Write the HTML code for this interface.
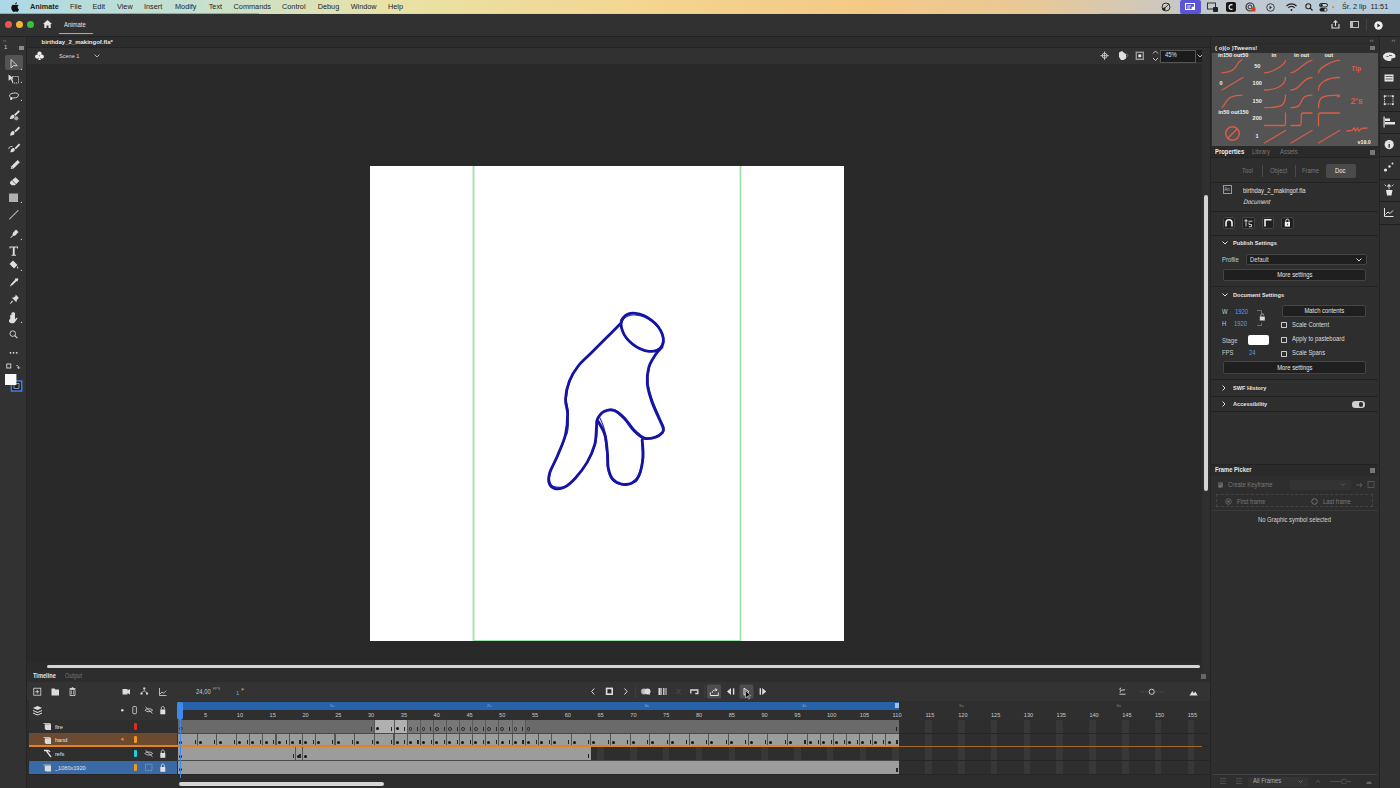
<!DOCTYPE html>
<html><head><meta charset="utf-8">
<style>
*{margin:0;padding:0;box-sizing:border-box}
html,body{width:1400px;height:788px;overflow:hidden;background:#272727;font-family:"Liberation Sans",sans-serif;color:#ddd}
.a{position:absolute}
.t{position:absolute;white-space:nowrap;line-height:1}
svg{position:absolute;overflow:visible}
#menubar{left:0;top:0;width:1400px;height:14px;background:linear-gradient(90deg,#acd9e6 0%,#c6e0cf 14%,#e9e2a6 28%,#f3d691 45%,#f4c986 62%,#e8c898 74%,#c4c8cc 86%,#b2cde0 100%)}
#menubar .t{top:3px;font-size:7.3px;color:#1e1e1e}
#titlebar{left:0;top:14px;width:1400px;height:22.5px;background:#313131;border-bottom:1px solid #222}
#toolbar{left:0;top:36.5px;width:27px;height:752px;background:#323232;border-right:1px solid #252525}
#doctab{left:27px;top:36.5px;width:1183px;height:11.5px;background:#2c2c2c;border-bottom:1px solid #252525}
#scenebar{left:27px;top:48px;width:1175px;height:16px;background:#313131}
#paste{left:27px;top:64px;width:1175px;height:607px;background:#292929}
#vscroll{left:1202px;top:48px;width:8px;height:623px;background:#2f2f2f}
#stage{left:370px;top:166px;width:474px;height:475px;background:#fff}
#timeline{left:27px;top:671px;width:1183px;height:117px;background:#2d2d2d}
#rpanel{left:1210px;top:36.5px;width:169px;height:752px;background:#2e2e2e;border-left:1px solid #242424}
#ricons{left:1378.5px;top:36.5px;width:21.5px;height:752px;background:#313131;border-left:1px solid #242424}
</style></head>
<body>
<div id="menubar" class="a">
<div class="a" style="left:0;top:13px;width:259px;height:1px;background:#6cb2dc"></div><div class="a" style="left:259px;top:13px;width:841px;height:1px;background:linear-gradient(90deg,#e6dc98,#f0c880 60%,#d8c8a8)"></div><div class="a" style="left:1100px;top:13px;width:300px;height:1px;background:#a8c4dc"></div>
<svg style="left:11px;top:2px" width="8" height="10" viewBox="0 0 16 20"><path fill="#111" d="M13.2 10.6c0-2.3 1.9-3.4 2-3.5-1.1-1.6-2.8-1.8-3.4-1.8-1.4-.1-2.8.9-3.5.9-.7 0-1.8-.8-3-.8C3.7 5.4 2.2 6.3 1.4 7.8c-1.7 2.9-.4 7.2 1.2 9.6.8 1.2 1.8 2.5 3 2.4 1.2 0 1.7-.8 3.1-.8 1.5 0 1.9.8 3.1.8 1.3 0 2.1-1.2 2.9-2.3.9-1.3 1.3-2.6 1.3-2.7 0 0-2.6-1-2.8-4.2zM10.9 3.6c.6-.8 1.1-1.9 1-3-.9 0-2.1.6-2.7 1.4-.6.7-1.1 1.8-1 2.9 1 .1 2.1-.5 2.7-1.3z"/></svg>
<span class="t" style="left:30px;font-weight:700">Animate</span>
<span class="t" style="left:70px">File</span>
<span class="t" style="left:92.5px">Edit</span>
<span class="t" style="left:117px">View</span>
<span class="t" style="left:144px">Insert</span>
<span class="t" style="left:175px">Modify</span>
<span class="t" style="left:208.7px">Text</span>
<span class="t" style="left:233.6px">Commands</span>
<span class="t" style="left:282px">Control</span>
<span class="t" style="left:317.7px">Debug</span>
<span class="t" style="left:350.7px">Window</span>
<span class="t" style="left:388px">Help</span>
<!-- status icons -->
<svg style="left:1161px;top:2px" width="10" height="10" viewBox="0 0 10 10"><circle cx="5" cy="5" r="4" fill="none" stroke="#333" stroke-width="1"/><path d="M2 7l3-2 3-3" stroke="#333" stroke-width="1" fill="none"/><circle cx="3" cy="7" r="1.6" fill="#222"/></svg>
<div class="a" style="left:1180px;top:0;width:21px;height:14px;background:#5b55d6;border-radius:2px"></div>
<svg style="left:1185px;top:3px" width="11" height="8" viewBox="0 0 11 8"><rect x="0.5" y="0.5" width="9" height="6" fill="none" stroke="#fff" stroke-width="1"/><path d="M2 3h4M2 5h3" stroke="#fff" stroke-width="0.8"/><circle cx="8" cy="5" r="1.5" fill="#fff"/></svg>
<svg style="left:1207px;top:2px" width="11" height="10" viewBox="0 0 11 10"><rect x="0.5" y="1" width="8" height="6" fill="none" stroke="#333" stroke-width="1"/><rect x="6" y="5" width="5" height="5" rx="1" fill="#222"/></svg>
<div class="a" style="left:1226px;top:2px;width:10px;height:10px;background:#151515;border-radius:2px"></div>
<svg style="left:1228px;top:4px" width="6" height="6" viewBox="0 0 6 6"><path d="M4.5 1A2.3 2.3 0 1 0 4.5 5" stroke="#fff" stroke-width="1.1" fill="none"/></svg>
<svg style="left:1245px;top:2px" width="11" height="10" viewBox="0 0 11 10"><circle cx="5" cy="5" r="4" fill="none" stroke="#333" stroke-width="1.2"/><circle cx="5" cy="5" r="2" fill="none" stroke="#333" stroke-width="1"/><rect x="6.5" y="5.5" width="4" height="4" fill="#d84020"/></svg>
<svg style="left:1266px;top:2.5px" width="9" height="9" viewBox="0 0 9 9"><circle cx="4.5" cy="4.5" r="3.8" fill="none" stroke="#333" stroke-width="0.9"/><path d="M3.5 2.8v3.4l2.6-1.7z" fill="#333"/></svg>
<svg style="left:1286px;top:3px" width="11" height="8" viewBox="0 0 11 8"><path d="M0.5 3A7 7 0 0 1 10.5 3" stroke="#222" stroke-width="1.2" fill="none"/><path d="M2.3 4.8A4.5 4.5 0 0 1 8.7 4.8" stroke="#222" stroke-width="1.2" fill="none"/><circle cx="5.5" cy="7" r="1" fill="#222"/></svg>
<svg style="left:1305px;top:3px" width="8" height="8" viewBox="0 0 8 8"><circle cx="3.3" cy="3.3" r="2.5" fill="none" stroke="#222" stroke-width="1.1"/><path d="M5.2 5.2L7.5 7.5" stroke="#222" stroke-width="1.2"/></svg>
<svg style="left:1319px;top:2.5px" width="10" height="9" viewBox="0 0 10 9"><rect x="0.5" y="0.5" width="8" height="3.5" rx="1.7" fill="none" stroke="#222" stroke-width="1"/><rect x="0.5" y="5" width="8" height="3.5" rx="1.7" fill="#222"/><circle cx="2.5" cy="2.2" r="1.2" fill="#222"/><circle cx="6.5" cy="6.7" r="1.2" fill="#ccc"/></svg>
<div class="a" style="left:1332px;top:6px;width:2px;height:2px;border-radius:1px;background:#f08020"></div>
<span class="t" style="left:1342px">Śr. 2 lip</span>
<span class="t" style="left:1370.5px">11:51</span>
</div>

<div id="titlebar" class="a">
<div class="a" style="left:5px;top:7px;width:7px;height:7px;border-radius:50%;background:#e8574d"></div>
<div class="a" style="left:15.5px;top:7px;width:7px;height:7px;border-radius:50%;background:#f0b62e"></div>
<div class="a" style="left:26.5px;top:7px;width:7px;height:7px;border-radius:50%;background:#36c23e"></div>
<svg style="left:43px;top:6px" width="9" height="8" viewBox="0 0 9 8"><path d="M4.5 0L0 4h1.3v4h2.2V5.5h2V8h2.2V4H9z" fill="#e6e6e6"/></svg>
<span class="t" style="left:64px;top:7.6px;font-size:6.6px;color:#e4e4e4;transform:scaleX(0.9);transform-origin:0 0">Animate</span>
<div class="a" style="left:58.5px;top:19px;width:34px;height:1.2px;background:#aaa"></div>
<svg style="left:1331px;top:6px" width="9" height="9" viewBox="0 0 9 9"><path d="M1 4v4h7V4" stroke="#e0e0e0" stroke-width="1.1" fill="none"/><path d="M4.5 6V0.8M2.6 2.6l1.9-1.9 1.9 1.9" stroke="#e0e0e0" stroke-width="1.1" fill="none"/></svg>
<svg style="left:1350px;top:7px" width="9" height="7" viewBox="0 0 9 7"><rect x="0.5" y="0.5" width="8" height="6" stroke="#bbb" stroke-width="1" fill="none"/><rect x="0.5" y="0.5" width="2.5" height="6" fill="#bbb"/></svg>
<div class="a" style="left:1366px;top:5px;width:1px;height:12px;background:#444"></div>
<svg style="left:1374px;top:6.5px" width="9" height="9" viewBox="0 0 9 9"><circle cx="4.5" cy="4.5" r="4.2" fill="#f0f0f0"/><path d="M3.4 2.6v3.8l3-1.9z" fill="#2a2a2a"/></svg>
</div>

<div id="toolbar" class="a">
<span class="t" style="left:3px;top:1px;font-size:5px;color:#888">&#8249;&#8249;</span>
<span class="t" style="left:4px;top:7.5px;font-size:6px;color:#ccc">1</span>
<div class="a" style="left:18.5px;top:9px;width:5px;height:4px;background:#8a8a8a"></div>
<div class="a" style="left:5px;top:18.7px;width:17.5px;height:14.5px;background:#545454;border-radius:2px"></div>
<svg style="left:0;top:0" width="27" height="400" viewBox="0 36 27 400">
<g fill="none" stroke="#dedede" stroke-width="0.9">
<path d="M11 58.5v8.5l2.3-2.3h4z"/>
<path d="M12.5 75.5h6v6.5h-6z" stroke-dasharray="1.2 0.8"/>
<path d="M13.5 92.2c3-0.8 5 0.4 5 2 0 1.8-2.5 2.8-5 2.8-2 0-4-0.8-4-2.2 0-1.5 2-2.6 4-2.6"/>
</g>
<g fill="#dedede">
<path d="M8.5 73.5l5 3.8-2 0.5 1.8 3-0.9 0.5-1.8-3-2 1.5z"/>
<circle cx="11.2" cy="97.8" r="1.2"/>
<path d="M20.5 69l1.5-1.5v1.5z M20.5 82l1.5-1.5v1.5z M20.5 100l1.5-1.5v1.5z"/>
<path d="M18.6 109.2l1.3 1.3-4.6 4.6-1.3-1.3z"/><path d="M13.6 113.8c1.2 1.1 1 3-0.5 3.7-1 0.5-2.8 0.4-3.4 0.5 0.5-0.7 0.5-1.9 1-2.8 0.6-1.2 2-1.9 2.9-1.4z"/><circle cx="16.3" cy="117.3" r="2.1" fill="#aaa"/>
<path d="M18.8 125.6l1.3 1.3-4.4 4.4-1.3-1.3z"/><path d="M13.8 130.2c1.2 1.1 1 3-0.5 3.7-1 0.5-2.8 0.4-3.4 0.5 0.5-0.7 0.5-1.9 1-2.8 0.6-1.2 2-1.9 2.9-1.4z"/>
<path d="M19 142.5l1.3 1.3-4.4 4.4-1.3-1.3z"/><path d="M14 147.1c1.2 1.1 1 3-0.5 3.7-1 0.5-2.8 0.4-3.4 0.5 0.5-0.7 0.5-1.9 1-2.8 0.6-1.2 2-1.9 2.9-1.4z"/><path d="M12.5 145.5c-2.5-0.5-4 1-3.6 2.6" fill="none" stroke="#dedede" stroke-width="0.8"/>
<path d="M17.6 159l2.2 2.2-6.2 6.2-2.9 0.7 0.7-2.9z"/><path d="M11.6 165.8l1.6 1.6" stroke="#555" stroke-width="0.6"/>
<path d="M15.5 176.2l3.8 3.8-4.3 4.3h-3.2l-1.9-1.9 0.3-1.7z"/><path d="M12.2 179.5l3.6 3.6" stroke="#333" stroke-width="0.7"/>
<rect x="9" y="192.5" width="9" height="8.5" fill="#b0b0b0"/><path d="M20.5 202l1.5-1.5v1.5z"/>
<path d="M9 218l9-9 0.6 0.6-9 9z"/>
<path d="M16 228.5l2.5 2.5-3.2 3.6-2.2 0.3-2.2 2.2-0.6-0.6 2.2-2.2 0.3-2.2z"/><path d="M20.5 239l1.5-1.5v1.5z"/>
<path d="M9.5 245.5h8.5v2h-1v-1h-2.3v7.2h1.2v1h-4.3v-1h1.2v-7.2h-2.3v1h-1z"/>
<path d="M13 259.5l4.5 4.5-3.5 3.5-4.5-4.5z"/><path d="M17.5 265c0.8 1.2 1.2 2 0.6 2.5-0.6 0.4-1.2-0.2-0.9-1z"/><path d="M20.5 270l1.5-1.5v1.5z"/>
<path d="M17.3 277l1.2 1.2-1 1 0.6 0.6-0.8 0.8-0.6-0.6-4.3 4.3-1.2 0.3-0.6 0.8-0.7-0.7 0.8-0.6 0.3-1.2 4.3-4.3-0.6-0.6 0.8-0.8 0.6 0.6z"/>
<path d="M15.6 293.5l3.4 3.4-1 0.6-1.3 2-0.3 1.8-4.6-4.6 1.8-0.3 2-1.3z"/><path d="M12 299.5l1 1-2.6 2.6-0.6-0.4z"/>
<path d="M10.2 317.5v-3.2c0-0.8 1.2-0.8 1.2 0v2.6v-4.7c0-0.8 1.2-0.8 1.2 0v4.6v-5.4c0-0.8 1.2-0.8 1.2 0v5.3v-4.6c0-0.8 1.2-0.8 1.2 0v6.2l1.2-1.3c0.6-0.6 1.6 0 1.1 0.7l-2.3 3.2c-0.6 0.8-1.4 1.4-2.6 1.4h-0.8c-1.6 0-2.7-1.2-2.7-2.8z"/><path d="M20.5 322l1.5-1.5v1.5z"/>
<circle cx="10.5" cy="351.8" r="0.9"/><circle cx="13.6" cy="351.8" r="0.9"/><circle cx="16.7" cy="351.8" r="0.9"/>
</g>
<g fill="none" stroke="#dedede" stroke-width="0.9">
<circle cx="12.8" cy="332.6" r="2.8"/><path d="M14.8 334.6l2.6 2.6" stroke-width="1.1"/>
<rect x="6.8" y="363" width="4" height="4"/><path d="M16.5 364.5c1.6 0 2.2 0.8 2.2 2.5M17.5 366.5l1.2 1.2 1-1.2"/>
</g>
<rect x="11.4" y="380" width="10.3" height="10" fill="#1d1d1d" stroke="#3d7be0" stroke-width="1.6"/>
<rect x="14" y="382.6" width="5" height="4.8" fill="#222" stroke="#ddd" stroke-width="0.6"/>
<rect x="5" y="373" width="11.4" height="11" fill="#fafafa"/>
</svg>
</div>
<div id="doctab" class="a">
<span class="t" style="left:14.5px;top:2.3px;font-size:6px;font-weight:700;color:#e8e8e8">birthday_2_makingof.fla*</span>
</div>
<div id="scenebar" class="a">
<svg style="left:8px;top:3px" width="9" height="10" viewBox="0 0 9 10"><circle cx="4.5" cy="2.5" r="2.1" fill="#eee"/><circle cx="2.2" cy="5.6" r="2.1" fill="#eee"/><circle cx="6.8" cy="5.6" r="2.1" fill="#eee"/><path d="M4.5 4.5L3.2 9h2.6z" fill="#eee"/></svg>
<span class="t" style="left:31.6px;top:5.3px;font-size:6.2px;color:#ddd;transform:scaleX(0.9);transform-origin:0 0">Scene 1</span>
<svg style="left:67px;top:6px" width="6" height="4" viewBox="0 0 6 4"><path d="M0.5 0.5L3 3l2.5-2.5" stroke="#bbb" stroke-width="0.9" fill="none"/></svg>
</div>
<div id="paste" class="a"></div>
<div class="a" style="left:1160px;top:49.5px;width:35.5px;height:13px;background:#1b1b1b;border:0.8px solid #555"></div>
<span class="t" style="left:1165px;top:52.3px;font-size:6.5px;color:#e0e0e0;transform:scaleX(0.9);transform-origin:0 0">45%</span>
<div class="a" style="left:1195.5px;top:50px;width:9.5px;height:12px;background:#1d1d1d;border-radius:0 2px 2px 0"></div>
<svg style="left:0;top:0" width="1400" height="788" viewBox="0 0 1400 788">
<g fill="none" stroke="#d0d0d0" stroke-width="0.9">
<circle cx="1104.6" cy="55.7" r="2.4"/><path d="M1104.6 51.5v8.4M1100.4 55.7h8.4"/>
<path d="M1153 53.5l2.5-2.5 2.5 2.5M1153 58l2.5 2.5 2.5-2.5"/>
<path d="M1197.5 54.5l2.5 2.5 2.5-2.5"/>
<rect x="1136.3" y="52.3" width="7" height="7" stroke="#999" stroke-width="1.4"/>
</g>
<rect x="1138.4" y="54.4" width="2.8" height="2.8" fill="#eee"/>
<path d="M1119 52.5l3-1.5 4 3.5v4l-2.5 1.5h-2.5l-2-3z" fill="#e0e0e0"/><path d="M1125.5 53l2.3 2.5-2.3 2.5" stroke="#aaa" stroke-width="0.7" fill="none"/>
</svg>

<div id="vscroll" class="a"></div>
<div id="stage" class="a"></div>
<svg style="left:0;top:0" width="1400" height="788" viewBox="0 0 1400 788">
<path d="M473.5 166v475M740.5 166v475" stroke="#a2e0ae" stroke-width="1.8"/>
<path d="M473 640.5h268" stroke="#9fe3ae" stroke-width="1"/>
<g fill="none" stroke="#1414a4" stroke-width="2.8" stroke-linecap="round" stroke-linejoin="round">
<path d="M620.1 324.1 C617.8 326.4 611.0 333.2 606.1 338.1 C601.2 343.0 595.5 348.7 590.9 353.3 C586.2 357.9 581.8 361.4 578.2 366.0 C574.6 370.6 571.4 375.7 569.3 381.2 C567.2 386.7 565.8 393.5 565.5 399.0 C565.2 404.5 567.6 408.3 567.6 414.2 C567.6 420.1 567.1 427.7 565.5 434.5 C563.9 441.3 560.5 448.4 557.9 454.8 C555.3 461.2 551.3 468.0 549.8 472.6 C548.3 477.2 548.3 480.1 549.0 482.7 C549.7 485.3 551.6 487.5 554.1 488.3 C556.6 489.1 560.7 489.1 564.3 487.3 C567.9 485.5 571.9 481.9 575.7 477.7 C579.5 473.5 583.9 467.9 587.1 462.4 C590.3 456.9 593.1 450.6 594.7 444.7 C596.3 438.8 596.1 431.1 596.5 426.9 C596.9 422.7 596.1 421.8 597.3 419.3 C598.5 416.8 600.9 413.2 603.6 411.7 C606.4 410.2 610.4 409.3 613.8 410.4 C617.2 411.4 620.5 414.6 623.9 418.0 C627.3 421.4 630.7 427.3 634.1 430.7 C637.5 434.1 640.6 437.2 644.2 438.3 C647.8 439.4 652.6 438.1 655.6 437.1 C658.6 436.1 661.2 434.0 662.5 432.5 C663.8 431.0 663.7 430.4 663.2 428.2 C662.7 426.0 661.3 423.8 659.4 419.3 C657.5 414.9 653.8 407.4 651.8 401.5 C649.8 395.6 647.8 389.5 647.3 383.8 C646.8 378.1 647.4 372.2 648.8 367.3 C650.2 362.4 653.4 358.0 655.6 354.6 C657.8 351.2 660.9 348.3 662.0 347.0"/>
<path d="M598.5 421.8 C599.6 423.9 603.4 429.4 604.9 434.5 C606.4 439.6 606.8 446.8 607.4 452.3 C608.0 457.8 607.4 463.1 608.2 467.5 C609.1 471.9 610.3 476.1 612.5 478.9 C614.7 481.6 618.2 483.3 621.4 484.0 C624.6 484.7 628.5 484.7 631.5 483.2 C634.5 481.7 637.2 479.4 639.1 475.1 C641.0 470.8 642.5 463.3 643.0 457.4 C643.5 451.5 642.3 442.6 642.2 439.6"/>
<ellipse cx="642.3" cy="332.3" rx="24" ry="15.3" transform="rotate(38 642.3 332.3)"/>
</g>
<g fill="none" stroke="#1616a6" stroke-width="1.1" stroke-linecap="round" opacity="0.9">
<path d="M620.1 324.1 C617.8 326.4 611.0 333.2 606.1 338.1 C601.2 343.0 595.5 348.7 590.9 353.3 C586.2 357.9 581.8 361.4 578.2 366.0 C574.6 370.6 571.4 375.7 569.3 381.2 C567.2 386.7 565.8 393.5 565.5 399.0 C565.2 404.5 567.6 408.3 567.6 414.2 C567.6 420.1 567.1 427.7 565.5 434.5 C563.9 441.3 560.5 448.4 557.9 454.8 C555.3 461.2 551.3 468.0 549.8 472.6 C548.3 477.2 548.3 480.1 549.0 482.7 C549.7 485.3 551.6 487.5 554.1 488.3 C556.6 489.1 560.7 489.1 564.3 487.3 C567.9 485.5 571.9 481.9 575.7 477.7 C579.5 473.5 583.9 467.9 587.1 462.4 C590.3 456.9 593.1 450.6 594.7 444.7 C596.3 438.8 596.1 431.1 596.5 426.9 C596.9 422.7 596.1 421.8 597.3 419.3 C598.5 416.8 600.9 413.2 603.6 411.7 C606.4 410.2 610.4 409.3 613.8 410.4 C617.2 411.4 620.5 414.6 623.9 418.0 C627.3 421.4 630.7 427.3 634.1 430.7 C637.5 434.1 640.6 437.2 644.2 438.3 C647.8 439.4 652.6 438.1 655.6 437.1 C658.6 436.1 661.2 434.0 662.5 432.5 C663.8 431.0 663.7 430.4 663.2 428.2 C662.7 426.0 661.3 423.8 659.4 419.3 C657.5 414.9 653.8 407.4 651.8 401.5 C649.8 395.6 647.8 389.5 647.3 383.8 C646.8 378.1 647.4 372.2 648.8 367.3 C650.2 362.4 653.4 358.0 655.6 354.6 C657.8 351.2 660.9 348.3 662.0 347.0" transform="translate(0.9 -0.7)"/>
<path d="M598.5 421.8 C599.6 423.9 603.4 429.4 604.9 434.5 C606.4 439.6 606.8 446.8 607.4 452.3 C608.0 457.8 607.4 463.1 608.2 467.5 C609.1 471.9 610.3 476.1 612.5 478.9 C614.7 481.6 618.2 483.3 621.4 484.0 C624.6 484.7 628.5 484.7 631.5 483.2 C634.5 481.7 637.2 479.4 639.1 475.1 C641.0 470.8 642.5 463.3 643.0 457.4 C643.5 451.5 642.3 442.6 642.2 439.6" transform="translate(-0.8 0.6)"/>
<ellipse cx="642" cy="333" rx="23" ry="15" transform="rotate(35 642 333)"/>
<path d="M622 318c-3 3-2 8 1 12"/>
<path d="M600 418c3 6 5 12 6 20"/>
<path d="M568 420c1 6 0 10-1 14"/>
<path d="M584 360c-3 3-6 6-8 10"/>
<path d="M552 486c3 1 7 2 11 1"/>
<path d="M636 482c2-3 4-6 5-10"/>
</g>
</svg>
<div id="timeline" class="a"></div>
<div class="a" style="left:27px;top:671px;width:1183px;height:11px;background:#2d2d2d"></div>
<span class="t" style="left:32.5px;top:673.2px;font-size:6.3px;font-weight:700;color:#e6e6e6;transform:scaleX(0.9);transform-origin:0 0">Timeline</span>
<span class="t" style="left:65px;top:673.2px;font-size:6.3px;color:#777;transform:scaleX(0.9);transform-origin:0 0">Output</span>
<div class="a" style="left:1201px;top:674px;width:5px;height:4.5px;background:#666"></div>
<div class="a" style="left:27px;top:774px;width:1183px;height:1px;background:#262626"></div>
<div class="a" style="left:27px;top:682px;width:1183px;height:19px;background:#333333"></div>
<div class="a" style="left:27px;top:700.5px;width:1183px;height:1px;background:#262626"></div>
<div class="a" style="left:29px;top:701px;width:148px;height:19px;background:#333333"></div>
<div class="a" style="left:177px;top:701px;width:1033px;height:19px;background:#2f2f2f"></div>
<div class="a" style="left:177px;top:702px;width:722px;height:7.5px;background:#2862a8"></div>
<span class="t" style="left:329.7px;top:703.5px;font-size:4.2px;color:#8fb4e0">1s</span>
<span class="t" style="left:487.1px;top:703.5px;font-size:4.2px;color:#8fb4e0">2s</span>
<span class="t" style="left:644.5px;top:703.5px;font-size:4.2px;color:#8fb4e0">3s</span>
<span class="t" style="left:801.9px;top:703.5px;font-size:4.2px;color:#8fb4e0">4s</span>
<span class="t" style="left:959.3px;top:703.5px;font-size:4.2px;color:#888">5s</span>
<span class="t" style="left:1116.7px;top:703.5px;font-size:4.2px;color:#888">6s</span>
<div class="a" style="left:895px;top:703px;width:3.5px;height:5px;background:#9fc0ea"></div>
<span class="t" style="left:204.0px;top:712.8px;font-size:5.6px;color:#c8c8c8">5</span>
<span class="t" style="left:236.8px;top:712.8px;font-size:5.6px;color:#c8c8c8">10</span>
<span class="t" style="left:269.6px;top:712.8px;font-size:5.6px;color:#c8c8c8">15</span>
<span class="t" style="left:302.4px;top:712.8px;font-size:5.6px;color:#c8c8c8">20</span>
<span class="t" style="left:335.2px;top:712.8px;font-size:5.6px;color:#c8c8c8">25</span>
<span class="t" style="left:368.0px;top:712.8px;font-size:5.6px;color:#c8c8c8">30</span>
<span class="t" style="left:400.8px;top:712.8px;font-size:5.6px;color:#c8c8c8">35</span>
<span class="t" style="left:433.6px;top:712.8px;font-size:5.6px;color:#c8c8c8">40</span>
<span class="t" style="left:466.4px;top:712.8px;font-size:5.6px;color:#c8c8c8">45</span>
<span class="t" style="left:499.1px;top:712.8px;font-size:5.6px;color:#c8c8c8">50</span>
<span class="t" style="left:531.9px;top:712.8px;font-size:5.6px;color:#c8c8c8">55</span>
<span class="t" style="left:564.7px;top:712.8px;font-size:5.6px;color:#c8c8c8">60</span>
<span class="t" style="left:597.5px;top:712.8px;font-size:5.6px;color:#c8c8c8">65</span>
<span class="t" style="left:630.3px;top:712.8px;font-size:5.6px;color:#c8c8c8">70</span>
<span class="t" style="left:663.1px;top:712.8px;font-size:5.6px;color:#c8c8c8">75</span>
<span class="t" style="left:695.9px;top:712.8px;font-size:5.6px;color:#c8c8c8">80</span>
<span class="t" style="left:728.7px;top:712.8px;font-size:5.6px;color:#c8c8c8">85</span>
<span class="t" style="left:761.5px;top:712.8px;font-size:5.6px;color:#c8c8c8">90</span>
<span class="t" style="left:794.3px;top:712.8px;font-size:5.6px;color:#c8c8c8">95</span>
<span class="t" style="left:827.0px;top:712.8px;font-size:5.6px;color:#c8c8c8">100</span>
<span class="t" style="left:859.8px;top:712.8px;font-size:5.6px;color:#c8c8c8">105</span>
<span class="t" style="left:892.6px;top:712.8px;font-size:5.6px;color:#c8c8c8">110</span>
<span class="t" style="left:925.4px;top:712.8px;font-size:5.6px;color:#c8c8c8">115</span>
<span class="t" style="left:958.2px;top:712.8px;font-size:5.6px;color:#c8c8c8">120</span>
<span class="t" style="left:991.0px;top:712.8px;font-size:5.6px;color:#c8c8c8">125</span>
<span class="t" style="left:1023.8px;top:712.8px;font-size:5.6px;color:#c8c8c8">130</span>
<span class="t" style="left:1056.6px;top:712.8px;font-size:5.6px;color:#c8c8c8">135</span>
<span class="t" style="left:1089.4px;top:712.8px;font-size:5.6px;color:#c8c8c8">140</span>
<span class="t" style="left:1122.2px;top:712.8px;font-size:5.6px;color:#c8c8c8">145</span>
<span class="t" style="left:1154.9px;top:712.8px;font-size:5.6px;color:#c8c8c8">150</span>
<span class="t" style="left:1187.7px;top:712.8px;font-size:5.6px;color:#c8c8c8">155</span>
<div class="a" style="left:177px;top:720px;width:1033px;height:54px;background:#2e2e2e"></div>
<div class="a" style="left:203.8px;top:720px;width:6.6px;height:54px;background:#383838"></div>
<div class="a" style="left:236.6px;top:720px;width:6.6px;height:54px;background:#383838"></div>
<div class="a" style="left:269.4px;top:720px;width:6.6px;height:54px;background:#383838"></div>
<div class="a" style="left:302.2px;top:720px;width:6.6px;height:54px;background:#383838"></div>
<div class="a" style="left:335.0px;top:720px;width:6.6px;height:54px;background:#383838"></div>
<div class="a" style="left:367.8px;top:720px;width:6.6px;height:54px;background:#383838"></div>
<div class="a" style="left:400.6px;top:720px;width:6.6px;height:54px;background:#383838"></div>
<div class="a" style="left:433.4px;top:720px;width:6.6px;height:54px;background:#383838"></div>
<div class="a" style="left:466.2px;top:720px;width:6.6px;height:54px;background:#383838"></div>
<div class="a" style="left:498.9px;top:720px;width:6.6px;height:54px;background:#383838"></div>
<div class="a" style="left:531.7px;top:720px;width:6.6px;height:54px;background:#383838"></div>
<div class="a" style="left:564.5px;top:720px;width:6.6px;height:54px;background:#383838"></div>
<div class="a" style="left:597.3px;top:720px;width:6.6px;height:54px;background:#383838"></div>
<div class="a" style="left:630.1px;top:720px;width:6.6px;height:54px;background:#383838"></div>
<div class="a" style="left:662.9px;top:720px;width:6.6px;height:54px;background:#383838"></div>
<div class="a" style="left:695.7px;top:720px;width:6.6px;height:54px;background:#383838"></div>
<div class="a" style="left:728.5px;top:720px;width:6.6px;height:54px;background:#383838"></div>
<div class="a" style="left:761.3px;top:720px;width:6.6px;height:54px;background:#383838"></div>
<div class="a" style="left:794.1px;top:720px;width:6.6px;height:54px;background:#383838"></div>
<div class="a" style="left:826.8px;top:720px;width:6.6px;height:54px;background:#383838"></div>
<div class="a" style="left:859.6px;top:720px;width:6.6px;height:54px;background:#383838"></div>
<div class="a" style="left:892.4px;top:720px;width:6.6px;height:54px;background:#383838"></div>
<div class="a" style="left:925.2px;top:720px;width:6.6px;height:54px;background:#383838"></div>
<div class="a" style="left:958.0px;top:720px;width:6.6px;height:54px;background:#383838"></div>
<div class="a" style="left:990.8px;top:720px;width:6.6px;height:54px;background:#383838"></div>
<div class="a" style="left:1023.6px;top:720px;width:6.6px;height:54px;background:#383838"></div>
<div class="a" style="left:1056.4px;top:720px;width:6.6px;height:54px;background:#383838"></div>
<div class="a" style="left:1089.2px;top:720px;width:6.6px;height:54px;background:#383838"></div>
<div class="a" style="left:1122.0px;top:720px;width:6.6px;height:54px;background:#383838"></div>
<div class="a" style="left:1154.7px;top:720px;width:6.6px;height:54px;background:#383838"></div>
<div class="a" style="left:1187.5px;top:720px;width:6.6px;height:54px;background:#383838"></div>
<div class="a" style="left:177px;top:732.5px;width:1033px;height:1px;background:#262626"></div>
<div class="a" style="left:177px;top:745.5px;width:1033px;height:1px;background:#262626"></div>
<div class="a" style="left:177px;top:760px;width:1033px;height:1px;background:#262626"></div>
<div class="a" style="left:177px;top:773.5px;width:1033px;height:1px;background:#262626"></div>
<div class="a" style="left:177.6px;top:720px;width:196.7px;height:12.5px;background:#6a6a6a"></div>
<div class="a" style="left:374.3px;top:720px;width:32.8px;height:12.5px;background:#b0b0b0"></div>
<div class="a" style="left:407.1px;top:720px;width:118.0px;height:12.5px;background:#777777"></div>
<div class="a" style="left:525.2px;top:720px;width:373.8px;height:12.5px;background:#6a6a6a"></div>
<div class="a" style="left:179.2px;top:726.9px;width:3.6px;height:3.6px;border-radius:50%;border:0.8px solid #333"></div>
<div class="a" style="left:373.8px;top:720px;width:1px;height:12.5px;background:#555"></div>
<div class="a" style="left:371.3px;top:726.8px;width:1.1px;height:3.8px;background:#222"></div>
<div class="a" style="left:375.9px;top:727.2px;width:3.1px;height:3.1px;border-radius:50%;background:#151515"></div>
<div class="a" style="left:393.5px;top:720px;width:1px;height:12.5px;background:#555"></div>
<div class="a" style="left:391.0px;top:726.8px;width:1.1px;height:3.8px;background:#222"></div>
<div class="a" style="left:395.6px;top:727.2px;width:3.1px;height:3.1px;border-radius:50%;background:#151515"></div>
<div class="a" style="left:406.6px;top:720px;width:1px;height:12.5px;background:#5a5a5a"></div>
<div class="a" style="left:404.1px;top:726.8px;width:1.1px;height:3.8px;background:#2a2a2a"></div>
<div class="a" style="left:408.5px;top:726.8px;width:3.8px;height:3.8px;border-radius:50%;border:0.8px solid #2a2a2a"></div>
<div class="a" style="left:419.7px;top:720px;width:1px;height:12.5px;background:#5a5a5a"></div>
<div class="a" style="left:417.2px;top:726.8px;width:1.1px;height:3.8px;background:#2a2a2a"></div>
<div class="a" style="left:421.6px;top:726.8px;width:3.8px;height:3.8px;border-radius:50%;border:0.8px solid #2a2a2a"></div>
<div class="a" style="left:432.9px;top:720px;width:1px;height:12.5px;background:#5a5a5a"></div>
<div class="a" style="left:430.4px;top:726.8px;width:1.1px;height:3.8px;background:#2a2a2a"></div>
<div class="a" style="left:434.8px;top:726.8px;width:3.8px;height:3.8px;border-radius:50%;border:0.8px solid #2a2a2a"></div>
<div class="a" style="left:446.0px;top:720px;width:1px;height:12.5px;background:#5a5a5a"></div>
<div class="a" style="left:443.5px;top:726.8px;width:1.1px;height:3.8px;background:#2a2a2a"></div>
<div class="a" style="left:447.9px;top:726.8px;width:3.8px;height:3.8px;border-radius:50%;border:0.8px solid #2a2a2a"></div>
<div class="a" style="left:459.1px;top:720px;width:1px;height:12.5px;background:#5a5a5a"></div>
<div class="a" style="left:456.6px;top:726.8px;width:1.1px;height:3.8px;background:#2a2a2a"></div>
<div class="a" style="left:461.0px;top:726.8px;width:3.8px;height:3.8px;border-radius:50%;border:0.8px solid #2a2a2a"></div>
<div class="a" style="left:472.2px;top:720px;width:1px;height:12.5px;background:#5a5a5a"></div>
<div class="a" style="left:469.7px;top:726.8px;width:1.1px;height:3.8px;background:#2a2a2a"></div>
<div class="a" style="left:474.1px;top:726.8px;width:3.8px;height:3.8px;border-radius:50%;border:0.8px solid #2a2a2a"></div>
<div class="a" style="left:485.3px;top:720px;width:1px;height:12.5px;background:#5a5a5a"></div>
<div class="a" style="left:482.8px;top:726.8px;width:1.1px;height:3.8px;background:#2a2a2a"></div>
<div class="a" style="left:487.2px;top:726.8px;width:3.8px;height:3.8px;border-radius:50%;border:0.8px solid #2a2a2a"></div>
<div class="a" style="left:498.4px;top:720px;width:1px;height:12.5px;background:#5a5a5a"></div>
<div class="a" style="left:495.9px;top:726.8px;width:1.1px;height:3.8px;background:#2a2a2a"></div>
<div class="a" style="left:500.3px;top:726.8px;width:3.8px;height:3.8px;border-radius:50%;border:0.8px solid #2a2a2a"></div>
<div class="a" style="left:511.6px;top:720px;width:1px;height:12.5px;background:#5a5a5a"></div>
<div class="a" style="left:509.1px;top:726.8px;width:1.1px;height:3.8px;background:#2a2a2a"></div>
<div class="a" style="left:513.5px;top:726.8px;width:3.8px;height:3.8px;border-radius:50%;border:0.8px solid #2a2a2a"></div>
<div class="a" style="left:524.7px;top:720px;width:1px;height:12.5px;background:#5a5a5a"></div>
<div class="a" style="left:522.2px;top:726.8px;width:1.1px;height:3.8px;background:#2a2a2a"></div>
<div class="a" style="left:526.6px;top:726.8px;width:3.8px;height:3.8px;border-radius:50%;border:0.8px solid #2a2a2a"></div>
<div class="a" style="left:896.4px;top:726.8px;width:1.1px;height:3.8px;background:#222"></div>
<div class="a" style="left:177.6px;top:733px;width:721.4px;height:12px;background:#9c9c9c"></div>
<div class="a" style="left:179.2px;top:740.7px;width:3.1px;height:3.1px;border-radius:50%;background:#151515"></div>
<div class="a" style="left:196.7px;top:733px;width:1.2px;height:12px;background:#555"></div>
<div class="a" style="left:194.5px;top:740.4px;width:1.2px;height:3.8px;background:#222"></div>
<div class="a" style="left:198.9px;top:740.7px;width:3.1px;height:3.1px;border-radius:50%;background:#151515"></div>
<div class="a" style="left:216.3px;top:733px;width:1.2px;height:12px;background:#555"></div>
<div class="a" style="left:214.1px;top:740.4px;width:1.2px;height:3.8px;background:#222"></div>
<div class="a" style="left:218.5px;top:740.7px;width:3.1px;height:3.1px;border-radius:50%;background:#151515"></div>
<div class="a" style="left:236.0px;top:733px;width:1.2px;height:12px;background:#555"></div>
<div class="a" style="left:233.8px;top:740.4px;width:1.2px;height:3.8px;background:#222"></div>
<div class="a" style="left:238.2px;top:740.7px;width:3.1px;height:3.1px;border-radius:50%;background:#151515"></div>
<div class="a" style="left:249.1px;top:733px;width:1.2px;height:12px;background:#555"></div>
<div class="a" style="left:246.9px;top:740.4px;width:1.2px;height:3.8px;background:#222"></div>
<div class="a" style="left:251.3px;top:740.7px;width:3.1px;height:3.1px;border-radius:50%;background:#151515"></div>
<div class="a" style="left:262.3px;top:733px;width:1.2px;height:12px;background:#555"></div>
<div class="a" style="left:260.1px;top:740.4px;width:1.2px;height:3.8px;background:#222"></div>
<div class="a" style="left:264.5px;top:740.7px;width:3.1px;height:3.1px;border-radius:50%;background:#151515"></div>
<div class="a" style="left:275.4px;top:733px;width:1.2px;height:12px;background:#555"></div>
<div class="a" style="left:273.2px;top:740.4px;width:1.2px;height:3.8px;background:#222"></div>
<div class="a" style="left:277.6px;top:740.7px;width:3.1px;height:3.1px;border-radius:50%;background:#151515"></div>
<div class="a" style="left:288.5px;top:733px;width:1.2px;height:12px;background:#555"></div>
<div class="a" style="left:286.3px;top:740.4px;width:1.2px;height:3.8px;background:#222"></div>
<div class="a" style="left:290.7px;top:740.7px;width:3.1px;height:3.1px;border-radius:50%;background:#151515"></div>
<div class="a" style="left:301.6px;top:733px;width:1.2px;height:12px;background:#555"></div>
<div class="a" style="left:299.4px;top:740.4px;width:1.2px;height:3.8px;background:#222"></div>
<div class="a" style="left:303.8px;top:740.7px;width:3.1px;height:3.1px;border-radius:50%;background:#151515"></div>
<div class="a" style="left:314.7px;top:733px;width:1.2px;height:12px;background:#555"></div>
<div class="a" style="left:312.5px;top:740.4px;width:1.2px;height:3.8px;background:#222"></div>
<div class="a" style="left:316.9px;top:740.7px;width:3.1px;height:3.1px;border-radius:50%;background:#151515"></div>
<div class="a" style="left:334.4px;top:733px;width:1.2px;height:12px;background:#555"></div>
<div class="a" style="left:332.2px;top:740.4px;width:1.2px;height:3.8px;background:#222"></div>
<div class="a" style="left:336.6px;top:740.7px;width:3.1px;height:3.1px;border-radius:50%;background:#151515"></div>
<div class="a" style="left:354.1px;top:733px;width:1.2px;height:12px;background:#555"></div>
<div class="a" style="left:351.9px;top:740.4px;width:1.2px;height:3.8px;background:#222"></div>
<div class="a" style="left:356.3px;top:740.7px;width:3.1px;height:3.1px;border-radius:50%;background:#151515"></div>
<div class="a" style="left:373.7px;top:733px;width:1.2px;height:12px;background:#555"></div>
<div class="a" style="left:371.5px;top:740.4px;width:1.2px;height:3.8px;background:#222"></div>
<div class="a" style="left:375.9px;top:740.7px;width:3.1px;height:3.1px;border-radius:50%;background:#151515"></div>
<div class="a" style="left:393.4px;top:733px;width:1.2px;height:12px;background:#555"></div>
<div class="a" style="left:391.2px;top:740.4px;width:1.2px;height:3.8px;background:#222"></div>
<div class="a" style="left:395.6px;top:740.7px;width:3.1px;height:3.1px;border-radius:50%;background:#151515"></div>
<div class="a" style="left:406.5px;top:733px;width:1.2px;height:12px;background:#555"></div>
<div class="a" style="left:404.3px;top:740.4px;width:1.2px;height:3.8px;background:#222"></div>
<div class="a" style="left:408.7px;top:740.7px;width:3.1px;height:3.1px;border-radius:50%;background:#151515"></div>
<div class="a" style="left:419.6px;top:733px;width:1.2px;height:12px;background:#555"></div>
<div class="a" style="left:417.4px;top:740.4px;width:1.2px;height:3.8px;background:#222"></div>
<div class="a" style="left:421.8px;top:740.7px;width:3.1px;height:3.1px;border-radius:50%;background:#151515"></div>
<div class="a" style="left:432.8px;top:733px;width:1.2px;height:12px;background:#555"></div>
<div class="a" style="left:430.6px;top:740.4px;width:1.2px;height:3.8px;background:#222"></div>
<div class="a" style="left:435.0px;top:740.7px;width:3.1px;height:3.1px;border-radius:50%;background:#151515"></div>
<div class="a" style="left:445.9px;top:733px;width:1.2px;height:12px;background:#555"></div>
<div class="a" style="left:443.7px;top:740.4px;width:1.2px;height:3.8px;background:#222"></div>
<div class="a" style="left:448.1px;top:740.7px;width:3.1px;height:3.1px;border-radius:50%;background:#151515"></div>
<div class="a" style="left:459.0px;top:733px;width:1.2px;height:12px;background:#555"></div>
<div class="a" style="left:456.8px;top:740.4px;width:1.2px;height:3.8px;background:#222"></div>
<div class="a" style="left:461.2px;top:740.7px;width:3.1px;height:3.1px;border-radius:50%;background:#151515"></div>
<div class="a" style="left:472.1px;top:733px;width:1.2px;height:12px;background:#555"></div>
<div class="a" style="left:469.9px;top:740.4px;width:1.2px;height:3.8px;background:#222"></div>
<div class="a" style="left:474.3px;top:740.7px;width:3.1px;height:3.1px;border-radius:50%;background:#151515"></div>
<div class="a" style="left:485.2px;top:733px;width:1.2px;height:12px;background:#555"></div>
<div class="a" style="left:483.0px;top:740.4px;width:1.2px;height:3.8px;background:#222"></div>
<div class="a" style="left:487.4px;top:740.7px;width:3.1px;height:3.1px;border-radius:50%;background:#151515"></div>
<div class="a" style="left:498.3px;top:733px;width:1.2px;height:12px;background:#555"></div>
<div class="a" style="left:496.1px;top:740.4px;width:1.2px;height:3.8px;background:#222"></div>
<div class="a" style="left:500.5px;top:740.7px;width:3.1px;height:3.1px;border-radius:50%;background:#151515"></div>
<div class="a" style="left:511.5px;top:733px;width:1.2px;height:12px;background:#555"></div>
<div class="a" style="left:509.3px;top:740.4px;width:1.2px;height:3.8px;background:#222"></div>
<div class="a" style="left:513.7px;top:740.7px;width:3.1px;height:3.1px;border-radius:50%;background:#151515"></div>
<div class="a" style="left:524.6px;top:733px;width:1.2px;height:12px;background:#555"></div>
<div class="a" style="left:522.4px;top:740.4px;width:1.2px;height:3.8px;background:#222"></div>
<div class="a" style="left:526.8px;top:740.7px;width:3.1px;height:3.1px;border-radius:50%;background:#151515"></div>
<div class="a" style="left:537.7px;top:733px;width:1.2px;height:12px;background:#555"></div>
<div class="a" style="left:535.5px;top:740.4px;width:1.2px;height:3.8px;background:#222"></div>
<div class="a" style="left:539.9px;top:740.7px;width:3.1px;height:3.1px;border-radius:50%;background:#151515"></div>
<div class="a" style="left:550.8px;top:733px;width:1.2px;height:12px;background:#555"></div>
<div class="a" style="left:548.6px;top:740.4px;width:1.2px;height:3.8px;background:#222"></div>
<div class="a" style="left:553.0px;top:740.7px;width:3.1px;height:3.1px;border-radius:50%;background:#151515"></div>
<div class="a" style="left:570.5px;top:733px;width:1.2px;height:12px;background:#555"></div>
<div class="a" style="left:568.3px;top:740.4px;width:1.2px;height:3.8px;background:#222"></div>
<div class="a" style="left:572.7px;top:740.7px;width:3.1px;height:3.1px;border-radius:50%;background:#151515"></div>
<div class="a" style="left:590.2px;top:733px;width:1.2px;height:12px;background:#555"></div>
<div class="a" style="left:588.0px;top:740.4px;width:1.2px;height:3.8px;background:#222"></div>
<div class="a" style="left:592.4px;top:740.7px;width:3.1px;height:3.1px;border-radius:50%;background:#151515"></div>
<div class="a" style="left:609.8px;top:733px;width:1.2px;height:12px;background:#555"></div>
<div class="a" style="left:607.6px;top:740.4px;width:1.2px;height:3.8px;background:#222"></div>
<div class="a" style="left:612.0px;top:740.7px;width:3.1px;height:3.1px;border-radius:50%;background:#151515"></div>
<div class="a" style="left:629.5px;top:733px;width:1.2px;height:12px;background:#555"></div>
<div class="a" style="left:627.3px;top:740.4px;width:1.2px;height:3.8px;background:#222"></div>
<div class="a" style="left:631.7px;top:740.7px;width:3.1px;height:3.1px;border-radius:50%;background:#151515"></div>
<div class="a" style="left:649.2px;top:733px;width:1.2px;height:12px;background:#555"></div>
<div class="a" style="left:647.0px;top:740.4px;width:1.2px;height:3.8px;background:#222"></div>
<div class="a" style="left:651.4px;top:740.7px;width:3.1px;height:3.1px;border-radius:50%;background:#151515"></div>
<div class="a" style="left:668.8px;top:733px;width:1.2px;height:12px;background:#555"></div>
<div class="a" style="left:666.6px;top:740.4px;width:1.2px;height:3.8px;background:#222"></div>
<div class="a" style="left:671.0px;top:740.7px;width:3.1px;height:3.1px;border-radius:50%;background:#151515"></div>
<div class="a" style="left:688.5px;top:733px;width:1.2px;height:12px;background:#555"></div>
<div class="a" style="left:686.3px;top:740.4px;width:1.2px;height:3.8px;background:#222"></div>
<div class="a" style="left:690.7px;top:740.7px;width:3.1px;height:3.1px;border-radius:50%;background:#151515"></div>
<div class="a" style="left:708.2px;top:733px;width:1.2px;height:12px;background:#555"></div>
<div class="a" style="left:706.0px;top:740.4px;width:1.2px;height:3.8px;background:#222"></div>
<div class="a" style="left:710.4px;top:740.7px;width:3.1px;height:3.1px;border-radius:50%;background:#151515"></div>
<div class="a" style="left:727.9px;top:733px;width:1.2px;height:12px;background:#555"></div>
<div class="a" style="left:725.7px;top:740.4px;width:1.2px;height:3.8px;background:#222"></div>
<div class="a" style="left:730.1px;top:740.7px;width:3.1px;height:3.1px;border-radius:50%;background:#151515"></div>
<div class="a" style="left:747.5px;top:733px;width:1.2px;height:12px;background:#555"></div>
<div class="a" style="left:745.3px;top:740.4px;width:1.2px;height:3.8px;background:#222"></div>
<div class="a" style="left:749.7px;top:740.7px;width:3.1px;height:3.1px;border-radius:50%;background:#151515"></div>
<div class="a" style="left:767.2px;top:733px;width:1.2px;height:12px;background:#555"></div>
<div class="a" style="left:765.0px;top:740.4px;width:1.2px;height:3.8px;background:#222"></div>
<div class="a" style="left:769.4px;top:740.7px;width:3.1px;height:3.1px;border-radius:50%;background:#151515"></div>
<div class="a" style="left:786.9px;top:733px;width:1.2px;height:12px;background:#555"></div>
<div class="a" style="left:784.7px;top:740.4px;width:1.2px;height:3.8px;background:#222"></div>
<div class="a" style="left:789.1px;top:740.7px;width:3.1px;height:3.1px;border-radius:50%;background:#151515"></div>
<div class="a" style="left:806.6px;top:733px;width:1.2px;height:12px;background:#555"></div>
<div class="a" style="left:804.4px;top:740.4px;width:1.2px;height:3.8px;background:#222"></div>
<div class="a" style="left:808.8px;top:740.7px;width:3.1px;height:3.1px;border-radius:50%;background:#151515"></div>
<div class="a" style="left:819.7px;top:733px;width:1.2px;height:12px;background:#555"></div>
<div class="a" style="left:817.5px;top:740.4px;width:1.2px;height:3.8px;background:#222"></div>
<div class="a" style="left:821.9px;top:740.7px;width:3.1px;height:3.1px;border-radius:50%;background:#151515"></div>
<div class="a" style="left:832.8px;top:733px;width:1.2px;height:12px;background:#555"></div>
<div class="a" style="left:830.6px;top:740.4px;width:1.2px;height:3.8px;background:#222"></div>
<div class="a" style="left:835.0px;top:740.7px;width:3.1px;height:3.1px;border-radius:50%;background:#151515"></div>
<div class="a" style="left:845.9px;top:733px;width:1.2px;height:12px;background:#555"></div>
<div class="a" style="left:843.7px;top:740.4px;width:1.2px;height:3.8px;background:#222"></div>
<div class="a" style="left:848.1px;top:740.7px;width:3.1px;height:3.1px;border-radius:50%;background:#151515"></div>
<div class="a" style="left:859.0px;top:733px;width:1.2px;height:12px;background:#555"></div>
<div class="a" style="left:856.8px;top:740.4px;width:1.2px;height:3.8px;background:#222"></div>
<div class="a" style="left:861.2px;top:740.7px;width:3.1px;height:3.1px;border-radius:50%;background:#151515"></div>
<div class="a" style="left:872.1px;top:733px;width:1.2px;height:12px;background:#555"></div>
<div class="a" style="left:869.9px;top:740.4px;width:1.2px;height:3.8px;background:#222"></div>
<div class="a" style="left:874.3px;top:740.7px;width:3.1px;height:3.1px;border-radius:50%;background:#151515"></div>
<div class="a" style="left:885.3px;top:733px;width:1.2px;height:12px;background:#555"></div>
<div class="a" style="left:883.1px;top:740.4px;width:1.2px;height:3.8px;background:#222"></div>
<div class="a" style="left:887.5px;top:740.7px;width:3.1px;height:3.1px;border-radius:50%;background:#151515"></div>
<div class="a" style="left:896.4px;top:740.4px;width:1.2px;height:3.5px;background:#222"></div>
<div class="a" style="left:29px;top:745px;width:870px;height:2px;background:#e5821c"></div>
<div class="a" style="left:899px;top:745.5px;width:303px;height:1px;background:#a8662a"></div>
<div class="a" style="left:177.6px;top:747px;width:413.2px;height:13px;background:#9c9c9c"></div>
<div class="a" style="left:179.2px;top:754.8px;width:3.1px;height:3.1px;border-radius:50%;background:#151515"></div>
<div class="a" style="left:295.0px;top:747px;width:1.2px;height:13px;background:#555"></div>
<div class="a" style="left:292.8px;top:754.4px;width:1.2px;height:3.8px;background:#222"></div>
<div class="a" style="left:297.2px;top:754.8px;width:3.1px;height:3.1px;border-radius:50%;background:#151515"></div>
<div class="a" style="left:301.6px;top:747px;width:1.2px;height:13px;background:#555"></div>
<div class="a" style="left:299.4px;top:754.4px;width:1.2px;height:3.8px;background:#222"></div>
<div class="a" style="left:303.8px;top:754.8px;width:3.1px;height:3.1px;border-radius:50%;background:#151515"></div>
<div class="a" style="left:588.2px;top:754.4px;width:1.2px;height:3.5px;background:#222"></div>
<div class="a" style="left:177.6px;top:761px;width:721.4px;height:12.5px;background:#9c9c9c"></div>
<div class="a" style="left:179.2px;top:768.3px;width:3.1px;height:3.1px;border-radius:50%;background:#151515"></div>
<div class="a" style="left:896.4px;top:768px;width:1.2px;height:3.5px;background:#222"></div>
<div class="a" style="left:177px;top:732.5px;width:722px;height:0.8px;background:#4a4a4a"></div>
<div class="a" style="left:177px;top:760.2px;width:722px;height:0.8px;background:#4a4a4a"></div>
<div class="a" style="left:180px;top:709px;width:1px;height:69px;background:#3d8ae8"></div>
<div class="a" style="left:177.4px;top:701.5px;width:6px;height:18px;background:#3d8ae8;border-radius:2px 2px 3px 3px"></div>
<div class="a" style="left:179px;top:781.5px;width:205px;height:4px;background:#d6d6d6;border-radius:2px"></div>
<div class="a" style="left:27px;top:662px;width:1175px;height:9px;background:#2b2b2b"></div>
<div class="a" style="left:47px;top:664.5px;width:1153px;height:3.5px;background:#d4d4d4;border-radius:2px"></div>
<div class="a" style="left:1204px;top:195px;width:3.5px;height:296px;background:#d4d4d4;border-radius:2px"></div>
<div class="a" style="left:29px;top:720px;width:148px;height:13px;background:#2f2f2f"></div>
<div class="a" style="left:29px;top:733px;width:148px;height:12px;background:#6c4a2f"></div>
<div class="a" style="left:29px;top:747px;width:148px;height:13px;background:#2f2f2f"></div>
<div class="a" style="left:29px;top:761px;width:148px;height:13px;background:#3a6aa5"></div>
<span class="t" style="left:55px;top:723.6px;font-size:6.2px;color:#e4e4e4;transform:scaleX(0.9);transform-origin:0 0">fire</span>
<span class="t" style="left:55px;top:736.8px;font-size:6.2px;color:#e4e4e4;transform:scaleX(0.9);transform-origin:0 0">hand</span>
<span class="t" style="left:55px;top:750.6px;font-size:6.2px;color:#e4e4e4;transform:scaleX(0.9);transform-origin:0 0">refs</span>
<span class="t" style="left:55px;top:764.6px;font-size:6.2px;color:#e4e4e4;transform:scaleX(0.9);transform-origin:0 0">_1080x1920</span>
<div class="a" style="left:134.3px;top:723px;width:2.5px;height:6.5px;background:#e02a20;border-radius:1px"></div>
<div class="a" style="left:134.3px;top:736px;width:2.5px;height:6.5px;background:#f09a18;border-radius:1px"></div>
<div class="a" style="left:134.3px;top:750px;width:2.5px;height:6.5px;background:#18d0e0;border-radius:1px"></div>
<div class="a" style="left:134.3px;top:764px;width:2.5px;height:6.5px;background:#f09a18;border-radius:1px"></div>
<span class="t" style="left:195.7px;top:689.3px;font-size:6.5px;color:#c8c8c8;transform:scaleX(0.9);transform-origin:0 0">24,00</span>
<span class="t" style="left:212.8px;top:687.5px;font-size:3.8px;color:#999">FPS</span>
<span class="t" style="left:236px;top:690px;font-size:6px;color:#5aa2ef">1</span>
<span class="t" style="left:241.5px;top:687.5px;font-size:4.2px;color:#ccc">F</span>
<svg style="left:0;top:0" width="1400" height="788" viewBox="0 0 1400 788">
<g fill="none" stroke="#dcdcdc" stroke-width="1">
<path d="M594.2 688.5l-2.6 3 2.6 3M624.5 688.5l2.6 3-2.6 3"/>
<rect x="606.6" y="688.4" width="5.6" height="5.8" stroke-width="1.6"/>
<path d="M661 688v7M663.8 688v7" stroke-width="1.3"/>
<path d="M690.8 693.5v-3.5h7v3.5h-2.5" stroke-width="1.3"/>
<path d="M710.3 692.5v3h8v-3M712 692.5c0-2 1.5-3 5-3M716 688l1.5 1.5-1.5 1.5" stroke-width="1"/>
<path d="M760.3 688.3v6.4" stroke-width="1.4"/><path d="M733.6 688.3v6.4" stroke-width="1.4"/>
<path d="M1119.5 694.2h6M1120 692.5c0-2 2-2.8 5-2.6M1119.5 689.2l1.6-1.4M1119.5 689.2l1.8 1.3" stroke-width="0.9"/>
<circle cx="1151.7" cy="691.8" r="2.6" stroke-width="0.9"/>
<path d="M1140 691.8h9M1154.5 691.8h10" stroke="#555" stroke-width="0.8" stroke-dasharray="1.5 1"/>
</g>
<g fill="#dcdcdc">
<rect x="608.4" y="690.2" width="2" height="2.2" fill="#222"/>
<circle cx="644" cy="691.5" r="2.9" fill="#bbb"/><circle cx="647.6" cy="691.5" r="2.9"/><path d="M648.5 695l1.2-1.2v1.2z"/>
<path d="M658.5 688h1.5v7h-1.5zM665.5 688h1v7h-1z"/>
<rect x="656" y="685" width="3" height="0" />
<path d="M727 691.5l4-3.5v7z"/><path d="M766.2 691.5l-4-3.5v7z"/>
<path d="M1189.5 695.5l2.8-4.5 1.6 2.2 1.4-1.8 2.4 4.1z"/>
</g>
<path d="M676.5 689l4 5M680.5 689l-4 5" stroke="#555" stroke-width="0.8"/>
<rect x="707" y="684.6" width="14" height="14" rx="1.5" fill="#4d4d4d"/>
<path d="M710.3 692.5v3h8v-3M712.2 692.8c0-2 1.5-3 4.5-3M715.5 688.3l1.5 1.5-1.5 1.5" stroke="#e8e8e8" stroke-width="1" fill="none"/>
<rect x="739.5" y="684.6" width="14" height="14" rx="1.5" fill="#4d4d4d"/>
<path d="M744 688.2v7l5-3.5z" fill="none" stroke="#e8e8e8" stroke-width="1"/>
<path d="M745.5 690.5v7.5l1.8-1.8 1.3 2.8 1-0.5-1.3-2.7h2.5z" fill="#111" stroke="#eee" stroke-width="0.5"/>
<path d="M635.7 685v13M705 685v13" stroke="#444" stroke-width="0.8"/>
</svg>
<svg style="left:0;top:0" width="1400" height="788" viewBox="0 0 1400 788">
<g fill="none" stroke="#dcdcdc" stroke-width="0.8">
<rect x="33.8" y="688.2" width="7" height="7"/><path d="M37.3 689.8v3.8M35.4 691.7h3.8"/>
<path d="M70.5 688.5h4M70 689.5v6h5v-6z"/>
<path d="M159.5 688v7.5h7M160 694l2-2 1.5 1.3 2.5-2.5"/>
</g>
<g fill="#dcdcdc">
<path d="M51.5 688.5h3l0.8 1h3.7v6h-7.5z"/>
<path d="M69.5 688.2h6v0.8h-6z M71.8 687.2h1.4v1h-1.4z M71 690.5h0.6v4h-0.6zM73.2 690.5h0.6v4h-0.6z"/>
<path d="M122.5 689h5v5.5h-5z M127.5 690.5l2.5-1.5v5.5l-2.5-1.5z"/>
<path d="M143.3 687.5h2v2h-2z M140.5 692.5h2v2h-2z M146 692.5h2v2h-2z"/>
</g>
<path d="M144.3 689.5v1.5M141.5 692.5l2.8-1.5 2.7 1.5" stroke="#dcdcdc" stroke-width="0.6" fill="none"/>
<!-- header row icons -->
<g fill="#e0e0e0">
<path d="M37.5 706l4.5 2-4.5 2-4.5-2z"/>
<path d="M33 710l4.5 2 4.5-2v1l-4.5 2-4.5-2z"/>
<path d="M33 712.5l4.5 2 4.5-2v1l-4.5 2-4.5-2z" />
<circle cx="122.3" cy="710.2" r="1.2"/>
<path d="M160.3 709.5h5v4.8h-5z"/>
</g>
<g fill="none" stroke="#e0e0e0" stroke-width="0.8">
<rect x="132.8" y="706.5" width="3.6" height="7.2" rx="0.8"/>
<path d="M145 710.2c1.2-2 5.8-2 7.6 0-1.8 2-6.4 2-7.6 0z M145.5 707l7 6.5"/>
<path d="M161.3 709.5v-1.5c0-2 3-2 3 0v1.5"/>
</g>
<!-- layer rows -->
<g fill="#dadada">
<path d="M43.5 723h7v5h-1v-4h-6z" fill="#bbb"/>
<path d="M44.8 724.3h6.2v5.6h-5l-1.2-1.2z"/>
<path d="M43.5 737h7v5h-1v-4h-6z" fill="#bbb"/>
<path d="M44.8 738.3h6.2v5.6h-5l-1.2-1.2z"/>
<path d="M43.5 764.5h7v5h-1v-4h-6z" fill="#bbb"/>
<path d="M44.8 765.8h6.2v5.6h-5l-1.2-1.2z"/>
</g>
<path d="M44 750.5h4l2.2 1.3M46.5 751l4.5 6" stroke="#e0e0e0" stroke-width="1.3" fill="none"/>
<g fill="#e0e0e0">
<path d="M160.3 753h5v4.8h-5z"/><path d="M160.3 767h5v4.8h-5z"/>
</g>
<g fill="none" stroke="#e0e0e0" stroke-width="0.8">
<path d="M161.3 753v-1.5c0-2 3-2 3 0v1.5"/><path d="M161.3 767v-1.5c0-2 3-2 3 0v1.5"/>
<path d="M145 753.5c1.2-2 5.8-2 7.6 0-1.8 2-6.4 2-7.6 0z M145.5 750.3l7 6.5"/>
<rect x="145.5" y="764.2" width="6.5" height="6.5" stroke="#9ab" stroke-dasharray="1 0.6"/>
</g>
<path d="M120.5 739.2l3-1.8v3.6z" fill="#f08a2a"/>
</g>
</svg>
<div id="rpanel" class="a"></div>
<div id="ricons" class="a"></div>
<span class="t" style="left:1369.5px;top:36.8px;font-size:6px;color:#999">&#8250;&#8250;</span>
<span class="t" style="left:1391.5px;top:36.8px;font-size:6px;color:#999">&#8249;&#8249;</span>
<div class="a" style="left:1211px;top:43px;width:167px;height:1px;background:#2a2a2a"></div>
<span class="t" style="left:1215px;top:44.5px;font-size:6px;font-weight:700;color:#e8e8e8">( o)(o )Tweens!</span>
<div class="a" style="left:1369.5px;top:45.5px;width:5.5px;height:4.5px;background:#777"></div>
<div class="a" style="left:1212px;top:53px;width:165.5px;height:92.5px;background:#545454"></div>
<span class="t" style="left:1218px;top:52.8px;font-size:5.5px;font-weight:700;color:#f2f2f2">in150 out50</span>
<span class="t" style="left:1271.5px;top:52.8px;font-size:5.5px;font-weight:700;color:#f2f2f2">in</span>
<span class="t" style="left:1294px;top:52.8px;font-size:5.5px;font-weight:700;color:#f2f2f2">in out</span>
<span class="t" style="left:1324.5px;top:52.8px;font-size:5.5px;font-weight:700;color:#f2f2f2">out</span>
<span class="t" style="left:1254.3px;top:63.8px;font-size:5.5px;font-weight:700;color:#f2f2f2">50</span>
<span class="t" style="left:1252.6px;top:81.2px;font-size:5.5px;font-weight:700;color:#f2f2f2">100</span>
<span class="t" style="left:1219.5px;top:81.2px;font-size:5.5px;font-weight:700;color:#f2f2f2">0</span>
<span class="t" style="left:1252.6px;top:99px;font-size:5.5px;font-weight:700;color:#f2f2f2">150</span>
<span class="t" style="left:1252.6px;top:116.2px;font-size:5.5px;font-weight:700;color:#f2f2f2">200</span>
<span class="t" style="left:1255.5px;top:134px;font-size:5.5px;font-weight:700;color:#f2f2f2">1</span>
<span class="t" style="left:1218.3px;top:109.6px;font-size:5.5px;font-weight:700;color:#f2f2f2">in50 out150</span>
<span class="t" style="left:1357.5px;top:140.2px;font-size:5.3px;font-weight:700;color:#f2f2f2">v19.0</span>
<span class="t" style="left:1351.3px;top:65.5px;font-size:6.6px;font-weight:700;color:#d75d48">Tip</span>
<span class="t" style="left:1350.6px;top:96.5px;font-size:9px;font-weight:700;color:#d75d48">2's</span>
<svg style="left:0;top:0" width="1400" height="788" viewBox="0 0 1400 788"><g fill="none" stroke="#d75d48" stroke-width="1.3" stroke-linecap="round"><path d="M1222 72.8 C1232 71.8 1234 69.8 1236.5 65.8 C1238 62.8 1239 60.8 1242 59.8"/><path d="M1222 90 L1243 77.5"/><path d="M1222 107.6 C1225 104.6 1227 98.6 1231 97.1 C1234 95.6 1238 95.6 1242 95.1"/><path d="M1264.5 72.8 C1271.85 72.8 1285.5 64.675 1285.5 60.3"/><path d="M1264.5 90 C1277.1 90 1285.5 85.0 1285.5 77.5"/><path d="M1264.5 107.6 C1282.35 107.6 1285.5 105.725 1285.5 95.1"/><path d="M1264.5 125.5 L1284.5 125.5 Q1285.5 125.5 1285.5 123.5 L1285.5 113.0"/><path d="M1264.5 143 L1285.5 130.5"/><path d="M1291 72.8 C1297.3 72.8 1305.7 60.3 1312 60.3"/><path d="M1291 90 C1301.5 90 1301.5 77.5 1312 77.5"/><path d="M1291 107.6 C1306.75 107.6 1296.25 95.1 1312 95.1"/><path d="M1291 125.5 L1300 125.5 Q1301 125.5 1301 123.5 L1301.5 114.0 Q1302 113.0 1303 113.0 L1312 113.0"/><path d="M1291 143 L1312 130.5"/><path d="M1318.5 72.8 C1318.5 68.425 1332.15 60.3 1339.5 60.3"/><path d="M1318.5 90 C1318.5 82.5 1326.9 77.5 1339.5 77.5"/><path d="M1318.5 107.6 C1318.5 96.975 1321.65 95.1 1339.5 95.1"/><path d="M1318.5 125.5 L1318.5 115.0 Q1318.5 113.0 1320.5 113.0 L1339.5 113.0"/><path d="M1318.5 143 L1339.5 130.5"/><path d="M1347 131l5 -0.5 2-2.5 1.5 3 2-3 1.5 3 2.5-2.5 5.5-0.5"/><path d="M1337 95.5l3 0.5-3 1" stroke-width="1"/><circle cx="1232.5" cy="133.5" r="6.8" stroke-width="1.5"/><path d="M1228 138l9-9" stroke-width="1.5"/></g></svg>
<div class="a" style="left:1211px;top:146px;width:167px;height:10.5px;background:#2a2a2a"></div>
<span class="t" style="left:1215px;top:148.80px;font-size:6.49px;font-weight:700;color:#f0f0f0;transform:scaleX(0.909);transform-origin:0 0">Properties</span>
<span class="t" style="left:1252px;top:148.80px;font-size:6.49px;font-weight:400;color:#777;transform:scaleX(0.909);transform-origin:0 0">Library</span>
<span class="t" style="left:1280px;top:148.80px;font-size:6.49px;font-weight:400;color:#777;transform:scaleX(0.909);transform-origin:0 0">Assets</span>
<div class="a" style="left:1369.5px;top:150px;width:5.5px;height:4.5px;background:#777"></div>
<div class="a" style="left:1211px;top:156.5px;width:167px;height:1px;background:#232323"></div>
<span class="t" style="left:1242px;top:167.50px;font-size:6.49px;font-weight:400;color:#777;transform:scaleX(0.909);transform-origin:0 0">Tool</span>
<div class="a" style="left:1262px;top:165px;width:0.8px;height:12px;background:#4a4a4a"></div>
<span class="t" style="left:1270px;top:167.50px;font-size:6.49px;font-weight:400;color:#777;transform:scaleX(0.909);transform-origin:0 0">Object</span>
<div class="a" style="left:1294.5px;top:165px;width:0.8px;height:12px;background:#4a4a4a"></div>
<span class="t" style="left:1302px;top:167.50px;font-size:6.49px;font-weight:400;color:#777;transform:scaleX(0.909);transform-origin:0 0">Frame</span>
<div class="a" style="left:1326px;top:163.5px;width:30px;height:14.5px;background:#4a4a4a;border-radius:2px"></div>
<span class="t" style="left:1335px;top:167.50px;font-size:6.49px;font-weight:400;color:#eee;transform:scaleX(0.909);transform-origin:0 0">Doc</span>
<div class="a" style="left:1211px;top:182px;width:167px;height:1px;background:#222"></div>
<div class="a" style="left:1222.7px;top:185.4px;width:9.2px;height:8.8px;border:0.9px solid #999"></div>
<span class="t" style="left:1224.3px;top:187.6px;font-size:4.6px;font-weight:400;color:#bbb">An</span>
<span class="t" style="left:1243px;top:187.50px;font-size:6.49px;font-weight:400;color:#e0e0e0;transform:scaleX(0.909);transform-origin:0 0">birthday_2_makingof.fla</span>
<span class="t" style="left:1243px;top:198.7px;font-size:6.5px;font-style:italic;color:#e0e0e0;transform:scaleX(0.9) skewX(-10deg);transform-origin:0 100%">Document</span>
<div class="a" style="left:1211px;top:211px;width:167px;height:1px;background:#222"></div>
<div class="a" style="left:1222.7px;top:216.7px;width:12.6px;height:12.6px;border:0.8px solid #444;border-radius:2px;background:#202020"></div>
<div class="a" style="left:1242.4px;top:216.7px;width:12.6px;height:12.6px;border:0.8px solid #444;border-radius:2px;background:#202020"></div>
<div class="a" style="left:1261.7px;top:216.7px;width:12.6px;height:12.6px;border:0.8px solid #444;border-radius:2px;background:#202020"></div>
<div class="a" style="left:1281.1000000000001px;top:216.7px;width:12.6px;height:12.6px;border:0.8px solid #444;border-radius:2px;background:#202020"></div>
<svg style="left:0;top:0" width="1400" height="788" viewBox="0 0 1400 788"><g fill="none" stroke="#eee" stroke-width="1.6">
<path d="M1226 226.5v-3.8a3 3 0 0 1 6 0v3.8"/>
<path d="M1265 226.5v-6.8h6.6"/>
</g><g fill="none" stroke="#e0e0e0" stroke-width="0.9"><path d="M1246 219v7.5M1244.3 220.8h3.4M1248.5 221.2h4M1249 222.5v2h2.6v2.2h-2.8"/></g>
<path d="M1284.8 222h5.2v4.6h-5.2z" fill="#eee"/><path d="M1285.8 222v-1.3a1.6 1.6 0 0 1 3.2 0v1.3" fill="none" stroke="#eee" stroke-width="0.9"/><rect x="1287" y="223.6" width="0.8" height="1.5" fill="#333"/>
</svg>
<div class="a" style="left:1211px;top:234.5px;width:167px;height:1px;background:#222"></div>
<svg style="left:1221.6px;top:240.7px" width="6" height="4" viewBox="0 0 6 4"><path d="M0.5 0.5L3 3l2.5-2.5" stroke="#ddd" stroke-width="1" fill="none"/></svg>
<span class="t" style="left:1232.8px;top:239.52px;font-size:6.16px;font-weight:700;color:#e6e6e6;transform:scaleX(0.909);transform-origin:0 0">Publish Settings</span>
<span class="t" style="left:1222px;top:256.50px;font-size:6.49px;font-weight:400;color:#ccc;transform:scaleX(0.909);transform-origin:0 0">Profile</span>
<div class="a" style="left:1245.5px;top:253.5px;width:121px;height:11.5px;background:#1f1f1f;border:0.8px solid #444;border-radius:2px"></div>
<span class="t" style="left:1250px;top:256.50px;font-size:6.49px;font-weight:400;color:#ddd;transform:scaleX(0.909);transform-origin:0 0">Default</span>
<svg style="left:1356px;top:257.5px" width="6" height="4" viewBox="0 0 6 4"><path d="M0.5 0.5L3 3l2.5-2.5" stroke="#ddd" stroke-width="1" fill="none"/></svg>
<div class="a" style="left:1222.7px;top:268.7px;width:143.6px;height:12.7px;background:#1f1f1f;border:0.8px solid #444;border-radius:2px"></div>
<span class="t" style="left:1222.7px;width:143.6px;text-align:center;top:271.7px;font-size:6.5px;color:#e6e6e6;transform:scaleX(0.9)">More settings</span>
<div class="a" style="left:1211px;top:285.8px;width:167px;height:1px;background:#222"></div>
<svg style="left:1221.6px;top:292.7px" width="6" height="4" viewBox="0 0 6 4"><path d="M0.5 0.5L3 3l2.5-2.5" stroke="#ddd" stroke-width="1" fill="none"/></svg>
<span class="t" style="left:1232.8px;top:291.52px;font-size:6.16px;font-weight:700;color:#e6e6e6;transform:scaleX(0.909);transform-origin:0 0">Document Settings</span>
<span class="t" style="left:1222.3px;top:309.20px;font-size:6.49px;font-weight:400;color:#ccc;transform:scaleX(0.909);transform-origin:0 0">W</span>
<span class="t" style="left:1234.5px;top:309.20px;font-size:6.49px;font-weight:400;color:#5a9ee0;transform:scaleX(0.909);transform-origin:0 0">1920</span>
<span class="t" style="left:1222.3px;top:321.20px;font-size:6.49px;font-weight:400;color:#ccc;transform:scaleX(0.909);transform-origin:0 0">H</span>
<span class="t" style="left:1233.5px;top:321.20px;font-size:6.49px;font-weight:400;color:#5a9ee0;transform:scaleX(0.909);transform-origin:0 0">1920</span>
<svg style="left:0;top:0" width="1400" height="788" viewBox="0 0 1400 788"><g fill="none" stroke="#999" stroke-width="0.6"><path d="M1257 310.5h4.5v3M1257 325.5h4.5v-2.5"/></g>
<path d="M1259.8 316.5h5v4h-5z" fill="#ddd"/><path d="M1260.8 316.5v-1.2a1.5 1.5 0 0 1 3 0" fill="none" stroke="#ddd" stroke-width="0.7"/></svg>
<div class="a" style="left:1281.7px;top:304.9px;width:84.6px;height:12.1px;background:#1f1f1f;border:0.8px solid #444;border-radius:2px"></div>
<span class="t" style="left:1281.7px;width:84.6px;text-align:center;top:307.7px;font-size:6.5px;color:#e6e6e6;transform:scaleX(0.9)">Match contents</span>
<div class="a" style="left:1281px;top:322.3px;width:6px;height:6px;border:0.9px solid #ccc;border-radius:0.8px"></div>
<span class="t" style="left:1292px;top:322.00px;font-size:6.49px;font-weight:400;color:#ddd;transform:scaleX(0.909);transform-origin:0 0">Scale Content</span>
<div class="a" style="left:1281px;top:336.7px;width:6px;height:6px;border:0.9px solid #ccc;border-radius:0.8px"></div>
<span class="t" style="left:1292px;top:336.40px;font-size:6.49px;font-weight:400;color:#ddd;transform:scaleX(0.909);transform-origin:0 0">Apply to pasteboard</span>
<div class="a" style="left:1281px;top:350.6px;width:6px;height:6px;border:0.9px solid #ccc;border-radius:0.8px"></div>
<span class="t" style="left:1292px;top:350.30px;font-size:6.49px;font-weight:400;color:#ddd;transform:scaleX(0.909);transform-origin:0 0">Scale Spans</span>
<span class="t" style="left:1222px;top:337.80px;font-size:6.49px;font-weight:400;color:#ccc;transform:scaleX(0.909);transform-origin:0 0">Stage</span>
<div class="a" style="left:1248px;top:335px;width:20.6px;height:9.7px;background:#fff;border-radius:2px"></div>
<span class="t" style="left:1222px;top:349.50px;font-size:6.49px;font-weight:400;color:#ccc;transform:scaleX(0.909);transform-origin:0 0">FPS</span>
<span class="t" style="left:1249px;top:349.50px;font-size:6.49px;font-weight:400;color:#5a9ee0;transform:scaleX(0.909);transform-origin:0 0">24</span>
<div class="a" style="left:1222.7px;top:361.2px;width:143.6px;height:13px;background:#1f1f1f;border:0.8px solid #444;border-radius:2px"></div>
<span class="t" style="left:1222.7px;width:143.6px;text-align:center;top:364.5px;font-size:6.5px;color:#e6e6e6;transform:scaleX(0.9)">More settings</span>
<div class="a" style="left:1211px;top:379px;width:167px;height:1px;background:#222"></div>
<svg style="left:1221.5px;top:385px" width="4" height="6" viewBox="0 0 4 6"><path d="M0.5 0.5L3 3l-2.5 2.5" stroke="#ddd" stroke-width="1" fill="none"/></svg>
<span class="t" style="left:1232.8px;top:384.82px;font-size:6.16px;font-weight:700;color:#e6e6e6;transform:scaleX(0.909);transform-origin:0 0">SWF History</span>
<div class="a" style="left:1211px;top:396px;width:167px;height:1px;background:#222"></div>
<svg style="left:1221.5px;top:401px" width="4" height="6" viewBox="0 0 4 6"><path d="M0.5 0.5L3 3l-2.5 2.5" stroke="#ddd" stroke-width="1" fill="none"/></svg>
<span class="t" style="left:1232.8px;top:400.82px;font-size:6.16px;font-weight:700;color:#e6e6e6;transform:scaleX(0.909);transform-origin:0 0">Accessibility</span>
<div class="a" style="left:1352px;top:401px;width:13px;height:6.5px;background:#cfcfcf;border-radius:3.3px"></div>
<div class="a" style="left:1358.5px;top:402px;width:4.5px;height:4.5px;background:#2a2a2a;border-radius:50%"></div>
<div class="a" style="left:1211px;top:411.4px;width:167px;height:1px;background:#222"></div>
<div class="a" style="left:1211px;top:463.5px;width:167px;height:1px;background:#222"></div>
<div class="a" style="left:1211px;top:464.5px;width:167px;height:11px;background:#2a2a2a"></div>
<span class="t" style="left:1215px;top:466.71px;font-size:6.38px;font-weight:700;color:#e8e8e8;transform:scaleX(0.909);transform-origin:0 0">Frame Picker</span>
<div class="a" style="left:1369.5px;top:468px;width:5.5px;height:4.5px;background:#777"></div>
<div class="a" style="left:1217.5px;top:482px;width:5.5px;height:5.5px;background:#555;border-radius:1px"></div>
<svg style="left:1218px;top:482.5px" width="5" height="5" viewBox="0 0 5 5"><path d="M0.8 2.5l1.3 1.3 2.3-2.8" stroke="#999" stroke-width="0.8" fill="none"/></svg>
<span class="t" style="left:1228px;top:481.80px;font-size:6.49px;font-weight:400;color:#777;transform:scaleX(0.909);transform-origin:0 0">Create Keyframe</span>
<div class="a" style="left:1290px;top:479.5px;width:61px;height:10.5px;background:#333;border-radius:1px"></div>
<svg style="left:0;top:0" width="1400" height="788" viewBox="0 0 1400 788"><path d="M1341 483.5l2 2 2-2" stroke="#666" stroke-width="0.7" fill="none"/><path d="M1356 485h6M1360 483l2 2-2 2" stroke="#666" stroke-width="0.8" fill="none"/><rect x="1368" y="481.5" width="6" height="6" stroke="#666" stroke-width="0.7" fill="none"/><circle cx="1228.5" cy="501.5" r="2.8" stroke="#666" stroke-width="0.9" fill="none"/><circle cx="1228.5" cy="501.5" r="1.3" fill="#666"/><circle cx="1314.5" cy="501.5" r="2.8" stroke="#777" stroke-width="0.9" fill="none"/></svg>
<div class="a" style="left:1216px;top:494.3px;width:157px;height:13px;border:0.8px dashed #444"></div>
<span class="t" style="left:1237px;top:498.70px;font-size:6.49px;font-weight:400;color:#777;transform:scaleX(0.909);transform-origin:0 0">First frame</span>
<span class="t" style="left:1323px;top:498.70px;font-size:6.49px;font-weight:400;color:#777;transform:scaleX(0.909);transform-origin:0 0">Last frame</span>
<div class="a" style="left:1211px;top:510px;width:167px;height:1px;background:#3a3a3a"></div>
<span class="t" style="left:1211px;width:167px;text-align:center;top:516.8px;font-size:6.5px;color:#d4d4d4;transform:scaleX(0.9)">No Graphic symbol selected</span>
<div class="a" style="left:1213px;top:774px;width:164px;height:0.8px;background:#444"></div>
<svg style="left:0;top:0" width="1400" height="788" viewBox="0 0 1400 788"><g fill="none" stroke="#555" stroke-width="0.8"><path d="M1220 778.5h6M1220 781h6M1220 783.5h6M1236 778.5h6M1236 781h6M1236 783.5h6"/><circle cx="1344" cy="781.5" r="2.5"/><path d="M1330 781.5h11M1347 781.5h4"/><path d="M1316 783l2-3 2 3"/></g><path d="M1366 784l2-3 1 1.3 1-1.3 2 3z" fill="#666"/></svg>
<div class="a" style="left:1248px;top:776.5px;width:60px;height:10px;background:#353535"></div>
<span class="t" style="left:1253px;top:778.30px;font-size:6.49px;font-weight:400;color:#aaa;transform:scaleX(0.909);transform-origin:0 0">All Frames</span>
<svg style="left:1298px;top:780px" width="5" height="4" viewBox="0 0 5 4"><path d="M0.5 0.5L2.5 2.5l2-2" stroke="#777" stroke-width="0.8" fill="none"/></svg>
<div class="a" style="left:1380px;top:66.5px;width:20px;height:1px;background:#1f1f1f"></div>
<div class="a" style="left:1380px;top:89px;width:20px;height:1px;background:#1f1f1f"></div>
<div class="a" style="left:1380px;top:111px;width:20px;height:1px;background:#1f1f1f"></div>
<div class="a" style="left:1380px;top:133px;width:20px;height:1px;background:#1f1f1f"></div>
<div class="a" style="left:1380px;top:156px;width:20px;height:1px;background:#1f1f1f"></div>
<div class="a" style="left:1380px;top:178.5px;width:20px;height:1px;background:#1f1f1f"></div>
<div class="a" style="left:1380px;top:201px;width:20px;height:1px;background:#1f1f1f"></div>
<div class="a" style="left:1380px;top:224px;width:20px;height:1px;background:#1f1f1f"></div>
<svg style="left:0;top:0" width="1400" height="788" viewBox="0 0 1400 788">
<g fill="#e4e4e4">
<path d="M1383 56.5c0-2.5 3-4 6-4 4 0 6.5 1.5 6.5 3.5 0 1.5-1 2.2-2.5 2.2h-1c-0.8 0-1 0.8-0.6 1.4 0.4 0.7-0.2 1.4-1.5 1.4-3.8 0-6.9-2-6.9-4.5z"/>
<rect x="1384.5" y="74.5" width="9" height="7"/>
<path d="M1383.5 116.5h1.2v11h-1.2z M1385 118.5h5v2.5h-5z M1385 122h10v2.5h-10z"/>
<circle cx="1389.2" cy="144.6" r="4.6"/>
<circle cx="1385.5" cy="170" r="1.6"/><circle cx="1389.5" cy="166.5" r="1.2"/><circle cx="1392.5" cy="163.5" r="1"/>
<path d="M1386 190h6.5l-1 5.5h-4.5z"/><path d="M1389 189.5v-5M1387 186.5l2-2 2 2M1386 186l-1.5-1.5M1392 186l1.5-1.5" stroke="#e4e4e4" stroke-width="0.8"/>
</g>
<g fill="none" stroke="#2a2a2a" stroke-width="0.7"><path d="M1386.5 56.5h2M1389 55.5h3"/><path d="M1385.5 76.5h7M1385.5 79h7"/></g>
<g fill="none" stroke="#e4e4e4" stroke-width="0.9" stroke-dasharray="1 0.7">
<rect x="1384.5" y="96" width="8.5" height="8"/>
</g>
<g fill="#e4e4e4"><rect x="1383.8" y="95.3" width="1.8" height="1.8"/><rect x="1392" y="95.3" width="1.8" height="1.8"/><rect x="1383.8" y="103.3" width="1.8" height="1.8"/><rect x="1392" y="103.3" width="1.8" height="1.8"/></g>
<path d="M1389.2 142.2v0.3M1389.2 144v3.8" stroke="#2a2a2a" stroke-width="1.3"/>
<path d="M1384.5 208v8.5h9M1385.5 214.5l2.5-2.5 2 1.5 3-3" fill="none" stroke="#e4e4e4" stroke-width="1"/>
</svg>
</body></html>
